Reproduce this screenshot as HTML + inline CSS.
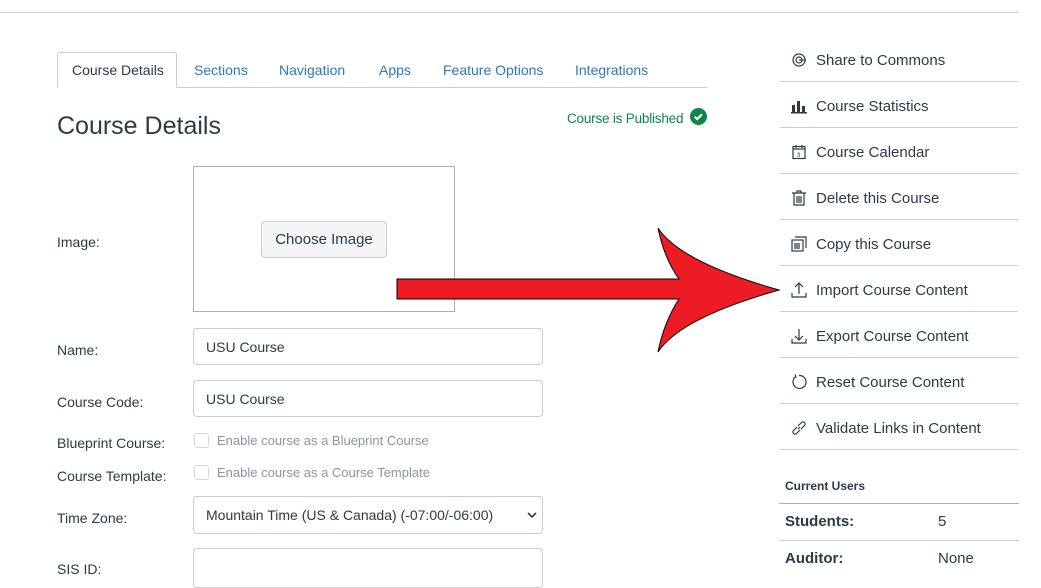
<!DOCTYPE html>
<html><head><style>
*{margin:0;padding:0;box-sizing:border-box}
body{width:1041px;height:574px;overflow:hidden;background:#fff;font-family:"Liberation Sans",sans-serif;color:#2d3b45;position:relative}
.a{position:absolute;white-space:nowrap}
.tab{position:absolute;top:62px;font-size:14px;color:#2b7abc}
.lbl{position:absolute;left:57px;font-size:14px;color:#2d3b45}
.inp{position:absolute;left:193px;width:350px;height:37px;border:1px solid #c7cdd1;border-radius:4px;font-size:14px;padding:10px 12px}
.ri{position:absolute;left:780px;width:238px;height:46px;border-bottom:1px solid #c7cdd1}
.ri span{position:absolute;left:36px;top:16px;font-size:15px;color:#2d3b45}
.ri svg{position:absolute;left:11px;top:16px}
.cb{position:absolute;left:194px;width:15px;height:15px;border:1px solid #d5d9dc;border-radius:3px}
.ct{position:absolute;left:217px;font-size:13px;color:#8b969e}
</style></head><body>
<div class="a" style="left:0;top:12px;width:1018px;border-top:1px solid #c7cdd1"></div>
<div class="a" style="left:57px;top:87px;width:650px;border-top:1px solid #c7cdd1"></div>
<div class="a" style="left:57px;top:52px;width:120px;height:36px;border:1px solid #c7cdd1;border-bottom:1px solid #fff;border-radius:3px 3px 0 0;background:#fff"></div>
<div class="tab" style="left:72px;color:#2d3b45">Course Details</div>
<div class="tab" style="left:194px">Sections</div>
<div class="tab" style="left:279px">Navigation</div>
<div class="tab" style="left:379px">Apps</div>
<div class="tab" style="left:443px">Feature Options</div>
<div class="tab" style="left:575px">Integrations</div>
<div class="a" style="left:57px;top:112px;font-size:25px;color:#2d3b45">Course Details</div>
<div class="a" style="left:567px;top:111px;font-size:13.5px;color:#0b874b;letter-spacing:-0.2px">Course is Published</div>
<svg class="a" style="left:690px;top:108px" width="17" height="17" viewBox="0 0 16 16"><circle cx="8" cy="8" r="8" fill="#0b874b"/><path d="M4.5 8.2l2.3 2.3 4.5-4.6" stroke="#fff" stroke-width="2" fill="none"/></svg>
<div class="lbl" style="top:234px">Image:</div>
<div class="a" style="left:193px;top:166px;width:262px;height:146px;border:1px solid #a5afb5"></div>
<div class="a" style="left:261px;top:221px;width:126px;height:37px;background:#f5f5f5;border:1px solid #c7cdd1;border-radius:4px;font-size:15px;padding-top:9px;text-align:center">Choose Image</div>
<div class="lbl" style="top:342px">Name:</div>
<div class="inp" style="top:328px">USU Course</div>
<div class="lbl" style="top:394px">Course Code:</div>
<div class="inp" style="top:380px">USU Course</div>
<div class="lbl" style="top:435px">Blueprint Course:</div>
<div class="cb" style="top:433px"></div><div class="ct" style="top:433px">Enable course as a Blueprint Course</div>
<div class="lbl" style="top:468px">Course Template:</div>
<div class="cb" style="top:465px"></div><div class="ct" style="top:465px">Enable course as a Course Template</div>
<div class="lbl" style="top:510px">Time Zone:</div>
<div class="inp" style="top:496px;height:38px">Mountain Time (US &amp; Canada) (-07:00/-06:00)<svg style="position:absolute;right:5px;top:14px" width="10" height="8" viewBox="0 0 10 8"><path d="M1 2l4 4 4-4" stroke="#2d3b45" stroke-width="1.6" fill="none"/></svg></div>
<div class="lbl" style="top:561px">SIS ID:</div>
<div class="inp" style="top:548px;height:40px"></div>

<div class="ri" style="top:36px"><svg width="16" height="16" viewBox="0 0 16 16" fill="none" stroke="#2d3b45" stroke-width="1.2"><circle cx="8" cy="8" r="6"/><circle cx="8" cy="8" r="3"/><path d="M8 8h7"/></svg><span>Share to Commons</span></div>
<div class="ri" style="top:82px"><svg width="16" height="16" viewBox="0 0 16 16" fill="#2d3b45"><rect x="1" y="7" width="3" height="7"/><rect x="6" y="3" width="3" height="11"/><rect x="11" y="8" width="3" height="6"/><rect x="0" y="14" width="16" height="1.5"/></svg><span>Course Statistics</span></div>
<div class="ri" style="top:128px"><svg width="16" height="16" viewBox="0 0 16 16" fill="none" stroke="#2d3b45" stroke-width="1.2"><rect x="2" y="2.5" width="12" height="12"/><path d="M2 5h12M5 1v3M11 1v3"/><text x="6" y="13" font-size="6" fill="#2d3b45" stroke="none">3</text></svg><span>Course Calendar</span></div>
<div class="ri" style="top:174px"><svg width="16" height="16" viewBox="0 0 16 16" fill="none" stroke="#2d3b45" stroke-width="1.2"><path d="M1 3h14M6 3V1h4v2M3 3v12h10V3M6 6v7M8 6v7M10 6v7"/></svg><span>Delete this Course</span></div>
<div class="ri" style="top:220px"><svg width="16" height="16" viewBox="0 0 16 16" fill="none" stroke="#2d3b45" stroke-width="1.2"><rect x="1" y="4" width="11" height="11"/><path d="M4 1h11v11M3 8h6M3 10h6M3 12h6"/></svg><span>Copy this Course</span></div>
<div class="ri" style="top:266px"><svg width="16" height="16" viewBox="0 0 16 16" fill="none" stroke="#2d3b45" stroke-width="1.2"><path d="M8 12V1M4 5l4-4 4 4M1 11v4h14v-4"/></svg><span>Import Course Content</span></div>
<div class="ri" style="top:312px"><svg width="16" height="16" viewBox="0 0 16 16" fill="none" stroke="#2d3b45" stroke-width="1.2"><path d="M8 1v11M4 8l4 4 4-4M1 11v4h14v-4"/></svg><span>Export Course Content</span></div>
<div class="ri" style="top:358px"><svg width="16" height="16" viewBox="0 0 16 16" fill="none" stroke="#2d3b45" stroke-width="1.2"><path d="M5 2.5A6.5 6.5 0 1 0 8 1.5M4 0.5l1 2.5-2.5 1"/></svg><span>Reset Course Content</span></div>
<div class="ri" style="top:404px"><svg width="16" height="16" viewBox="0 0 16 16" fill="none" stroke="#2d3b45" stroke-width="1.2"><path d="M7 9l2-2M6 7L2.5 10.5a2 2 0 0 0 3 3L9 10M10 9l3.5-3.5a2 2 0 0 0-3-3L7 6"/></svg><span>Validate Links in Content</span></div>
<div class="a" style="left:785px;top:479px;font-size:12px;font-weight:bold;color:#2d3b45">Current Users</div>
<div class="a" style="left:779px;top:503px;width:240px;border-top:1px solid #a5afb5"></div>
<div class="a" style="left:785px;top:513px;font-size:15px;font-weight:bold">Students:</div>
<div class="a" style="left:938px;top:513px;font-size:15px">5</div>
<div class="a" style="left:779px;top:540px;width:240px;border-top:1px solid #c7cdd1"></div>
<div class="a" style="left:785px;top:550px;font-size:15px;font-weight:bold">Auditor:</div>
<div class="a" style="left:938px;top:550px;font-size:15px">None</div>

<svg class="a" style="left:0;top:0" width="1041" height="574"><path d="M397,279 L679,279 Q664,258 658,228 Q680,262 779,290 Q680,318 658,352 Q664,322 679,299 L397,299 Z" fill="#ed1c24" stroke="#000" stroke-width="1"/></svg>
</body></html>
